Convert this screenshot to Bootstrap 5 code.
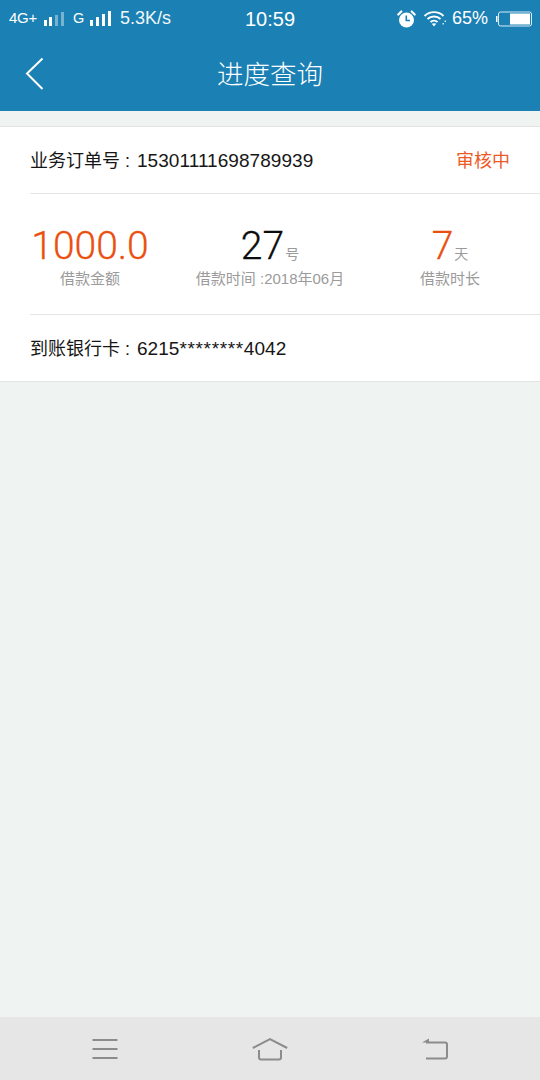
<!DOCTYPE html>
<html lang="zh-CN">
<head>
<meta charset="utf-8">
<title>进度查询</title>
<link rel="stylesheet" href="https://cdn.jsdelivr.net/npm/bootstrap@5.3.0/dist/css/bootstrap.min.css">
<style>
html,body{height:100%}
body{background:#eff3f2;font-family:"Liberation Sans","Noto Sans CJK SC",sans-serif;color:#161616;overflow:hidden}
.screen{height:1080px;width:540px}
.topbar{background:#1b80b3;height:111px;color:#fff;flex:none}
.statusline{height:37px;padding:0 8px 0 9px}
.st-net{font-size:15px;letter-spacing:-.3px;width:30px}
.st-bars{margin-left:5px}
.st-g{font-size:14.5px;margin-left:8px;width:12px}
.st-speed{font-size:18px;margin-left:8px;color:#f1f7fa}
.st-clock{font-size:20px;position:absolute;left:245px;top:7px;line-height:24px}
.st-pct{font-size:18px;margin:0 8px 0 5px}
.st-wifi{margin-left:8px}
.titleline{height:74px;position:relative;padding-top:2px}
.backlink{position:absolute;left:25px;top:20px;line-height:0}
.pagehead{font-size:26.5px;font-weight:300;margin:0;line-height:34px}
.panel{margin-top:15px;background:#fff;border-top:1px solid #e2e5e4;border-bottom:1px solid #e2e5e4;height:256px;flex:none}
.orderline{height:66px;padding:3px 30px 0;font-size:18px}
.infokey{width:107px}
.digits{font-size:19px;letter-spacing:.05px}
.stars{letter-spacing:.65px}
.statusword{color:#ed5a26}
.rule{height:1px;background:#e4e6e6;margin-left:30px}
.statrow{height:120px;padding-top:29px}
.bignum{font-family:Roboto,"Liberation Sans",sans-serif;font-weight:300;font-size:39px;line-height:46px;height:46px;-webkit-text-stroke:.3px currentColor}
.orange{color:#ea4f10}
.dark{color:#0c0c0c}
.unit{font-family:"Liberation Sans","Noto Sans CJK SC",sans-serif;font-weight:400;font-size:14px;line-height:1;color:#9a9a9a;margin-left:1px;-webkit-text-stroke:0}
.statlabel{font-size:15px;line-height:18px;color:#9b9b9b;margin-top:1px}
.cardline{height:66px;padding:3px 30px 0;font-size:18px}
.softkeys{background:#e6e6e6;height:63px;flex:none;margin-top:auto}
.softkey{width:165px}
</style>
</head>
<body>
<div class="screen d-flex flex-column position-relative">
  <header class="topbar">
    <div class="statusline d-flex align-items-center position-relative">
      <span class="st-net">4G+</span>
      <svg class="st-bars" width="21" height="14" viewBox="0 0 21 14"><g fill="#fff"><rect x="0" y="8" width="3" height="6"/><rect x="5" y="5" width="3" height="9"/></g><g fill="#fff" opacity=".4"><rect x="11" y="3" width="3" height="11"/><rect x="17" y="0" width="3" height="14"/></g></svg>
      <span class="st-g">G</span>
      <svg class="st-bars" width="22" height="15" viewBox="0 0 22 15"><g fill="#fff"><rect x="0" y="9" width="3" height="6"/><rect x="6" y="6" width="3" height="9"/><rect x="12" y="3" width="3" height="12"/><rect x="18" y="0" width="3" height="15"/></g></svg>
      <span class="st-speed">5.3K/s</span>
      <span class="st-clock">10:59</span>
      <span class="ms-auto d-flex align-items-center">
        <svg width="19" height="18" viewBox="0 0 19 18"><circle cx="9.500" cy="10" r="7.500" fill="#fff"/><path d="M9.300 5.500V10.500H13" fill="none" stroke="#1b80b3" stroke-width="1.600"/><path d="M1.300 4.500L4.300 1.500M17.700 4.500L14.700 1.500" stroke="#fff" stroke-width="2.200" stroke-linecap="round"/></svg>
        <svg class="st-wifi" width="23" height="17" viewBox="0 0 23 17"><g fill="none" stroke="#fff" stroke-width="1.900"><path d="M.5 6C5.500 .8 14.500 .8 19.500 6"/><path d="M3.500 9C7 5.600 13 5.600 16.500 9"/><path d="M6.500 12C8.500 10.200 11.500 10.200 13.500 12"/></g><path d="M10 16.500L7.800 13.800C9.100 12.900 10.900 12.900 12.200 13.800Z" fill="#fff"/><path d="M20.500 10.500h1.500v1.500h-1.500zM18.500 13h1.500v1.500h-1.500z" fill="#fff" opacity=".8"/></svg>
        <span class="st-pct">65%</span>
        <svg width="36" height="16" viewBox="0 0 36 16"><rect x="0" y="5" width="1.500" height="6" fill="#fff"/><rect x="2.500" y="1" width="33" height="14" rx="2" fill="none" stroke="#d9ebf4" stroke-width="1"/><rect x="14" y="2.500" width="20" height="11" fill="#fff"/></svg>
      </span>
    </div>
    <div class="titleline d-flex align-items-center justify-content-center">
      <a class="backlink" href="#" aria-label="返回"><svg width="20" height="34" viewBox="0 0 20 34"><path d="M17.500 1.500L2 16.500L17.500 32" fill="none" stroke="#fff" stroke-width="2"/></svg></a>
      <h1 class="pagehead">进度查询</h1>
    </div>
  </header>

  <main class="panel">
    <div class="orderline d-flex align-items-center justify-content-between">
      <span class="d-flex align-items-center"><span class="infokey">业务订单号 :</span><span class="digits">15301111698789939</span></span>
      <span class="statusword">审核中</span>
    </div>
    <div class="rule"></div>
    <div class="row g-0 statrow text-center">
      <div class="col-4">
        <div class="bignum orange">1000.0</div>
        <div class="statlabel">借款金额</div>
      </div>
      <div class="col-4">
        <div class="bignum dark">27<span class="unit">号</span></div>
        <div class="statlabel">借款时间 :2018年06月</div>
      </div>
      <div class="col-4">
        <div class="bignum orange">7<span class="unit">天</span></div>
        <div class="statlabel">借款时长</div>
      </div>
    </div>
    <div class="rule"></div>
    <div class="cardline d-flex align-items-center"><span class="infokey">到账银行卡 :</span><span class="digits">6215<span class="stars">********</span>4042</span></div>
  </main>

  <nav class="softkeys d-flex align-items-center justify-content-center">
    <div class="softkey text-center"><svg width="26" height="20" viewBox="0 0 26 20"><path d="M.500 1H25.500M.500 10H25.500M.500 19H25.500" stroke="#8c8c8c" stroke-width="2"/></svg></div>
    <div class="softkey text-center"><svg width="36" height="23" viewBox="0 0 36 23"><path d="M.800 10L18 1.200L35.200 10" fill="none" stroke="#8c8c8c" stroke-width="2"/><path d="M7 12V19.500Q7 21.500 9 21.500H27Q29 21.500 29 19.500V12" fill="none" stroke="#8c8c8c" stroke-width="2"/></svg></div>
    <div class="softkey text-center"><svg width="26" height="22" viewBox="0 0 26 22"><path d="M4 4.500H23Q25 4.500 25 6.500V18.500Q25 20.500 23 20.500H4" fill="none" stroke="#8c8c8c" stroke-width="2"/><path d="M0 4.500L7 .5V4.500Z" fill="#8c8c8c"/></svg></div>
  </nav>
</div>
<script src="https://cdn.jsdelivr.net/npm/bootstrap@5.3.0/dist/js/bootstrap.bundle.min.js"></script>
</body>
</html>
